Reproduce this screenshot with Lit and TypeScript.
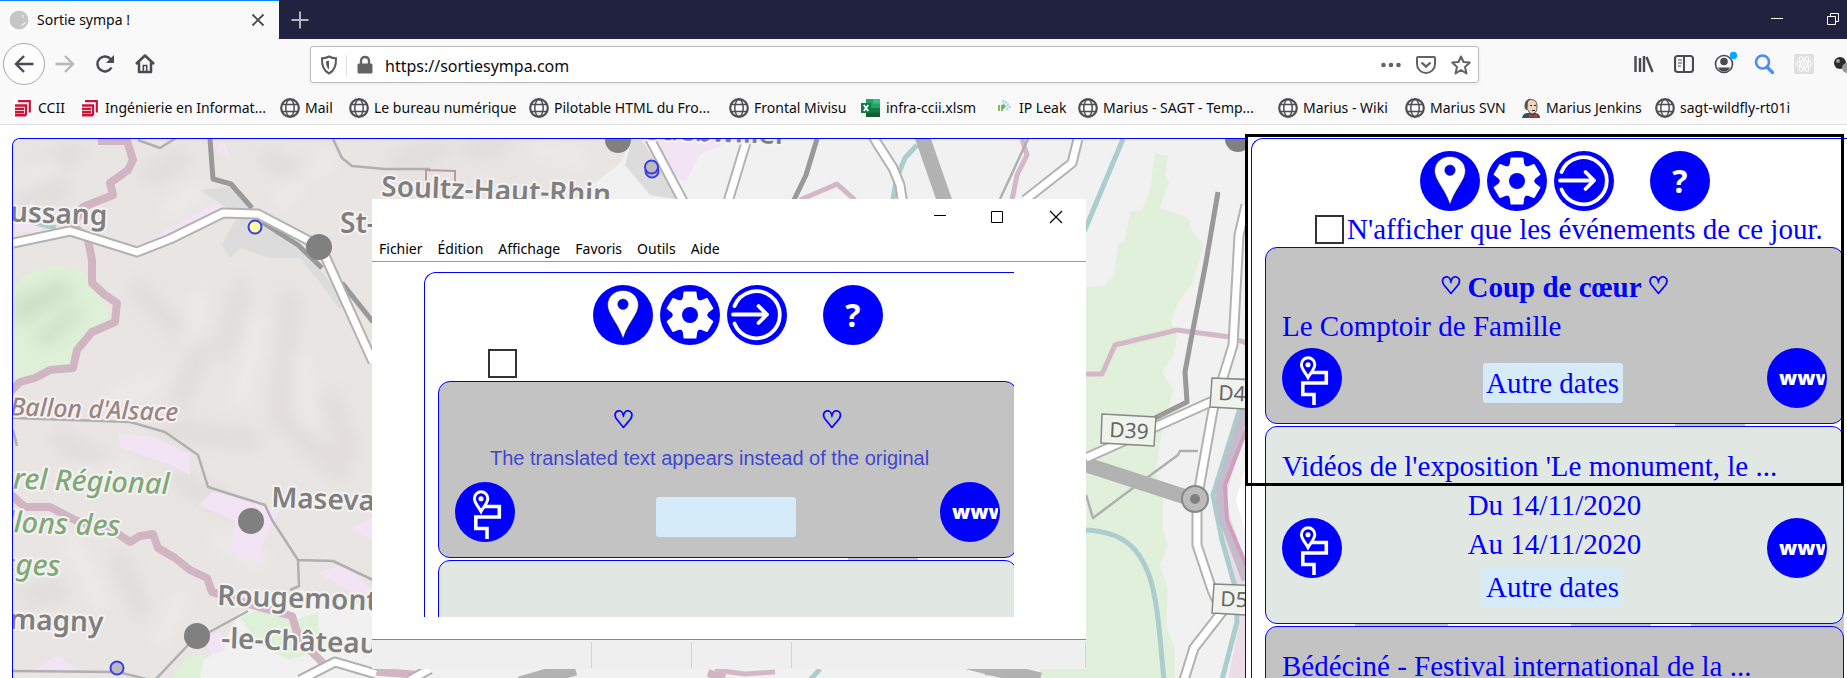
import { LitElement, html, svg, css, nothing } from "lit";
import { customElement, property } from "lit/decorators.js";

interface EventInfo {
  favourite?: boolean;
  title: string;
  dates: string[];
  tone: "grey" | "mint";
}

const EVENTS: EventInfo[] = [
  { favourite: true, title: "Le Comptoir de Famille", dates: [], tone: "grey" },
  {
    title: "Vidéos de l'exposition 'Le monument, le ...",
    dates: ["Du 14/11/2020", "Au 14/11/2020"],
    tone: "mint",
  },
  { title: "Bédéciné - Festival international de la ...", dates: [], tone: "grey" },
];

const gearPoints = (() => {
  const pts: string[] = [];
  const put = (r: number, deg: number) => {
    const a = ((deg - 90) * Math.PI) / 180;
    pts.push(`${(30 + r * Math.cos(a)).toFixed(1)},${(30 + r * Math.sin(a)).toFixed(1)}`);
  };
  for (let i = 0; i < 6; i++) {
    const c = i * 60;
    put(16.5, c - 28);
    put(18, c - 21);
    put(23.5, c - 14);
    put(23.5, c + 14);
    put(18, c + 21);
    put(16.5, c + 28);
  }
  return pts.join(" ");
})();

const pinIcon = svg`<path fill="#fff" stroke="#222" stroke-width=".6" fill-rule="evenodd"
  d="M30 5.5C21 5.5 14.6 11.8 14.6 20C14.6 29 24 37 29 51Q30 55 31 51C36 37 45.4 29 45.4 20C45.4 11.8 39 5.5 30 5.5ZM30 14a5.2 5.2 0 1 1 0 10.400a5.200 5.200 0 1 1 0-10.400Z"/>`;
const gearIcon = svg`<polygon points=${gearPoints} fill="#fff" stroke="#fff" stroke-width="1.500" stroke-linejoin="round"/>
  <circle cx="30" cy="30" r="8" fill="#00f"/>`;
const enterIcon = svg`<g fill="none" stroke="#fff" stroke-width="3.800" stroke-linecap="round" stroke-linejoin="round">
  <path d="M7.500 21A23.500 23.500 0 1 1 7.500 38.500"/><path d="M6 29.500H40M31.500 21L40 29.500L31.500 38"/></g>`;
const routeIcon = svg`<g fill="none" stroke="#fff" stroke-width="3.600">
  <path d="M29 24.500H44.300V35H20.800V46.500H32V57"/>
  <path d="M26 29.500C23 24 19.400 21 19.400 16.500a6.700 6.700 0 0 1 13.400 0C32.800 21 29 24 26 29.500Z" fill="#00f" stroke-width="3"/>
  <circle cx="26" cy="16.700" r="1.800" fill="#fff" stroke-width="1.500"/></g>`;

@customElement("sortie-panel")
export class SortiePanel extends LitElement {
  /** When set, the captions are left out, only the frames and icons remain. */
  @property({ type: Boolean }) bare = false;
  @property() notice = "";

  static styles = css`
    :host {
      display: block;
      box-sizing: border-box;
      border: 1px solid #00f;
      border-right: 0;
      border-bottom: 0;
      border-radius: 12px 0 0 0;
      background: #fff;
      padding: 12px 3px 0 13px;
      color: #00f;
      font: 29px/39px "Liberation Serif", serif;
      overflow: hidden;
    }
    button {
      border: 0;
      padding: 0;
      margin: 0;
      color: inherit;
      font: inherit;
    }
    .round {
      width: 60px;
      height: 60px;
      flex: none;
      border-radius: 50%;
      background: #00f;
      color: #fff;
      overflow: hidden;
      font: bold 32px/60px "Open Sans", sans-serif;
    }
    .round svg {
      display: block;
    }
    .web {
      padding: 0 2px 0 12px;
      text-align: left;
      font-size: 20px;
      font-weight: 800;
    }
    .web span {
      display: block;
      overflow: hidden;
      line-height: 60px;
    }
    .tools {
      display: flex;
      gap: 7px;
      padding-left: 155px;
    }
    .help {
      margin-left: 29px;
    }
    .today {
      display: flex;
      align-items: center;
      gap: 3px;
      height: 36px;
      padding-left: 50px;
      white-space: nowrap;
    }
    .today input {
      appearance: none;
      flex: none;
      box-sizing: border-box;
      width: 29px;
      height: 29px;
      margin: 0;
      border: 2px solid #333;
      background: #fff;
    }
    .cards {
      display: grid;
      gap: 2px;
      background: linear-gradient(90deg, #fff 90px, #c8c8c8 90px 183px, #fff 183px 306px, #c8c8c8 306px 386px, #fff 386px 426px, #c8c8c8 426px) 0 370px / 100% 20px no-repeat, linear-gradient(#c8c8c8, #c8c8c8) 410px 170px / 70px 12px no-repeat;
    }
    .card {
      border: 1px solid #00f;
      border-radius: 12px;
      padding: 20px 16px 13px;
    }
    .grey {
      background: #c3c3c3;
    }
    .mint {
      background: #e1e8e4;
    }
    h2,
    p {
      margin: 0;
      height: 39px;
      font-size: inherit;
      white-space: nowrap;
    }
    h2 {
      display: flex;
      justify-content: center;
      gap: 6px;
    }
    .heart {
      font: 24px/36px "DejaVu Sans", sans-serif;
      -webkit-text-stroke: 1px #00f;
    }
    .bare h2 {
      gap: 187px;
    }
    .bare p {
      padding-left: 35px;
      color: #3f48cc;
      font: 20px/34px "Liberation Sans", sans-serif;
    }
    .row {
      display: flex;
      align-items: center;
      justify-content: space-between;
    }
    .mid {
      display: grid;
      justify-items: center;
      padding: 0 0 3px;
    }
    .favourite .mid {
      padding: 14px 0 7px;
    }
    .dates {
      width: 140px;
      height: 40px;
      margin: 3px 4px 0 0;
      border-radius: 3px;
      background: #d6ebf9;
    }
  `;

  private renderEvent(e: EventInfo) {
    return html`<article class="card ${e.tone} ${e.favourite ? "favourite" : ""}">
      ${e.favourite
        ? html`<h2><span class="heart">♡</span>${this.bare ? nothing : html`<span>Coup de cœur</span>`}<span class="heart">♡</span></h2>`
        : nothing}
      <p>${this.bare ? (e.favourite ? this.notice : nothing) : e.title}</p>
      <div class="row">
        <button class="round" aria-label="Itinéraire"><svg width="60" height="60" viewBox="0 0 60 60">${routeIcon}</svg></button>
        <div class="mid">
          ${e.dates.map((d) => html`<span>${this.bare ? nothing : d}</span>`)}
          <button class="dates" aria-label="Autre dates">${this.bare ? nothing : "Autre dates"}</button>
        </div>
        <button class="round web" aria-label="Site web"><span>www</span></button>
      </div>
    </article>`;
  }

  render() {
    return html`<div class=${this.bare ? "bare" : "full"}>
      <div class="tools">
        ${[
          ["Lieu", pinIcon],
          ["Réglages", gearIcon],
          ["Connexion", enterIcon],
        ].map(([name, icon]) => html`<button class="round" aria-label=${name}><svg width="60" height="60" viewBox="0 0 60 60">${icon}</svg></button>`)}
        <button class="round help" aria-label="Aide">?</button>
      </div>
      <label class="today"><input type="checkbox" aria-label="N'afficher que les événements de ce jour." />${this.bare ? nothing : html`<span>N'afficher que les événements de ce jour.</span>`}</label>
      <div class="cards">${EVENTS.map((e) => this.renderEvent(e))}</div>
    </div>`;
  }
}

@customElement("sortie-map")
export class SortieMap extends LitElement {
  static styles = css`
    :host {
      display: block;
      overflow: hidden;
      background: #f1f1f1;
    }
    svg {
      display: block;
      width: 100%;
      height: 100%;
    }
    .line path {
      fill: none;
      stroke-linejoin: round;
    }
    .casing {
      stroke: #b2b2b0;
      stroke-width: 11;
    }
    .road {
      stroke: #fff;
      stroke-width: 7;
    }
    .minor {
      stroke: #b0b0b0;
      stroke-width: 2.500;
    }
    .rail {
      stroke: #999;
      stroke-width: 5;
    }
    .motorway {
      stroke: #b2b2b2;
      stroke-width: 15;
    }
    .water {
      stroke: #accdcd;
      stroke-width: 5;
    }
    .limit {
      stroke: #d2b5c3;
      stroke-width: 8;
    }
    .border {
      stroke: #d4b8c8;
      stroke-width: 5;
    }
    text {
      font: 600 28px "Noto Sans", sans-serif;
      fill: #7f7f7f;
      stroke: #f5f3f2;
      stroke-width: 4;
      paint-order: stroke;
      stroke-linejoin: round;
    }
    .park {
      font: italic 500 29px "Noto Sans", sans-serif;
      fill: #80a878;
    }
    .peak {
      font: italic 500 25px "Noto Sans", sans-serif;
      fill: #9a8484;
    }
    .ref {
      font: 21px "Noto Sans", sans-serif;
      fill: #666;
      stroke-width: 1;
    }
    .sign {
      fill: #eef3ec;
      stroke: #888;
      stroke-width: 1.500;
    }
    .town {
      fill: #808080;
    }
    .marker {
      fill: #bbb;
      stroke: #3a3aee;
      stroke-width: 2;
    }
    .marker.gold {
      fill: #ffffa0;
    }
  `;

  render() {
    const road = "M13 243L70 231L137 252L170 239L223 213L258 214L321 247L373 362M650 139L685 205M747 139L727 205M873 136L877 143L893 168L900 185L903 205M1078 139L1072 163L1025 200M1246 205L1239 235L1233 345L1213 410L1197 500L1197 545L1212 590L1222 612L1194 648L1184 680M1086 458L1155 427L1215 400M300 680L335 662L376 674M410 680L430 669";
    return html`<svg viewBox="13 139 1232 539" preserveAspectRatio="xMinYMin slice" role="img" aria-label="Carte">
      <defs>
        <filter id="soft" x="-20%" y="-20%" width="140%" height="140%"><feGaussianBlur stdDeviation="8" /></filter>
      </defs>
      <path fill="#e8e5e3" d="M0 130H640L618 165L560 210H400V610L340 600L300 590L240 612L220 650L170 680H0Z" />
      <g filter="url(#soft)" fill="none" stroke-linecap="round">
        <path stroke="#dfdad9" stroke-width="22" opacity=".7" d="M35 168L75 152M150 175L180 160M25 200L60 190M140 290L200 350L180 400M240 290L225 350M290 300L280 420L340 470M330 400L350 450M60 440L100 460M170 430L250 440M180 480L220 500M120 560L140 610M30 595L60 590M270 160L310 180M400 160L440 150M470 150L500 145" />
        <path stroke="#efedeb" stroke-width="16" opacity=".7" d="M20 180L50 165M170 210L200 190M110 400L160 380M200 300L190 340M260 320L240 400M300 360L310 420M70 540L100 600M220 540L260 560M180 600L160 640M280 200L330 160M80 475L130 470M540 150L580 160" />
      </g>
      <path fill="#dff0d8" d="M13 285L30 272L58 265L75 270L86 273L90 285L103 300L110 318L105 325L88 335L75 350L70 368L35 375L13 377Z" />
      <path fill="#cddfc6" filter="url(#soft)" d="M13 300L60 280L78 290L30 320L13 325ZM30 340L75 305L85 312L50 345Z" />
      <path fill="#dff0d8" d="M240 618L262 608L296 620L318 612L320 650L290 660L260 645ZM185 658L204 655L200 680H170Z" />
      <path fill="#e0f0da" d="M1155 153L1168 156L1165 175L1169 182L1160 208L1188 218L1192 232L1204 244L1193 282L1180 300L1171 320L1177 335L1174 355L1162 372L1173 390L1162 430L1156 470L1163 495L1163 530L1168 545L1160 565L1168 590L1166 625L1175 650V680H1040V600L1086 287L1105 286L1114 275L1118 245L1125 240L1130 212L1142 210L1150 190Z" />
      <path fill="#dddcdc" d="M200 190L232 186L252 208L275 225L300 245L345 300L340 310L318 280L300 258L270 258L240 248L230 258L222 245L238 215ZM632 140L625 165L650 195L680 200L660 139Z" />
      <path fill="#f3e4f5" d="M150 240L215 203L224 208L185 236ZM222 139L232 160L216 150ZM13 232L32 200L40 222L42 232ZM118 434L155 437L190 455L190 475L170 465L120 447ZM198 505L213 491L280 510L262 545V563L232 552L235 520ZM318 572L345 565L372 590V605ZM350 528L372 518V540ZM32 671L58 655L78 671ZM640 139H735L700 155L685 182L660 165ZM205 640L220 630L225 650L212 655Z" />
      <path fill="#ecdce8" d="M1246 425L1225 500L1246 565V680H1228L1240 620L1215 500Z" />
      <path fill="#fff" d="M1246 465L1236 500L1246 535Z" />
      <g class="line">
        <path class="limit" d="M98 141L127 141L133 160L128 170L110 183L113 195L83 207L73 225L88 240L92 260L92 283L105 295L117 303L115 322L92 332L77 350L73 368L50 370L35 378L20 382L10 392M10 494L25 507L50 507L75 520L118 534L130 542L140 536L153 534L158 548L175 558L190 570L207 578L212 592L255 606L292 616L297 632L310 650L325 665M355 670L420 675M708 673L725 678" />
        <path class="border" d="M800 200L837 184L855 200M1022 139L1027 155L1017 175L1012 200M1086 374L1102 374L1115 345L1177 330L1230 337L1246 343M715 670L745 674L775 672M985 673L1030 674" />
        <path class="water" d="M917 145L905 158L896 180L893 200M1123 139L1084 232M1086 530C1125 532 1140 550 1149 575S1160 640 1164 680M1241 405L1213 495L1222 540L1236 590L1237 622L1222 680M820 669L810 680M32 222L56 228" />
        <path stroke="#c3bccb" stroke-width="9" d="M1246 408L1220 490L1222 515L1246 580" />
        <path stroke="#cf9fbd" stroke-width="4" d="M1246 430L1225 485L1227 520L1246 565" />
        <path class="minor" d="M138 140L160 148L176 138M333 139L342 158L352 166L385 169L430 169M13 418L130 422L165 432L198 455L208 487L265 505L272 520L298 560L333 561L373 580M298 560L299 586L290 590M195 640L248 611M155 680L190 643M13 671L118 672L150 680M13 430L17 446M1086 495L1093 518L1133 488L1178 455L1180 451L1198 451M1028 139L1000 199" />
        <path class="rail" d="M210 139L213 179L231 184L252 208M262 222L298 245L322 268M342 283L373 322M817 139L806 175L793 202M1218 192L1206 262L1190 345L1185 372L1187 402L1155 418" />
        <path class="motorway" d="M922 136L945 202M1084 464L1195 500M960 660L1040 680M520 684L575 668" />
        <path class="casing" d=${road} />
        <path class="road" d=${road} />
      </g>
      <path fill="none" stroke="#b99c9c" stroke-width="2" d="M426 186V170L455 171V187" />
      <circle cx="319" cy="247" r="13" class="town" />
      <circle cx="618" cy="140" r="13" class="town" />
      <circle cx="251" cy="521" r="13" class="town" />
      <circle cx="197" cy="636" r="13" class="town" />
      <circle cx="1238" cy="139" r="13" class="town" />
      <circle cx="1195" cy="499" r="13" fill="#bbb" stroke="#888" stroke-width="2" />
      <circle cx="1195" cy="499" r="5" class="town" />
      <g>
        <text x="107" y="225" text-anchor="end" transform="rotate(2 107 225)">Bussang</text>
        <text x="340" y="233">St-Amarin</text>
        <text x="381" y="196" transform="rotate(2 381 196)">Soultz-Haut-Rhin</text>
        <text x="640" y="139" transform="rotate(2 640 139)">Guebwiller</text>
        <text x="271" y="507" transform="rotate(2 271 507)">Masevaux</text>
        <text x="217" y="605" transform="rotate(2 217 605)">Rougemont</text>
        <text x="221" y="648" transform="rotate(2 221 648)">-le-Château</text>
        <text x="103" y="632" text-anchor="end" transform="rotate(2 103 632)">Giromagny</text>
      </g>
      <text class="peak" x="178" y="421" text-anchor="end" transform="rotate(2 178 421)">Ballon d'Alsace</text>
      <text class="park" x="169" y="494" text-anchor="end" transform="rotate(2 169 494)">Naturel Régional</text>
      <text class="park" x="120" y="536" text-anchor="end" transform="rotate(2 120 536)">Ballons des</text>
      <text class="park" x="60" y="576" text-anchor="end" transform="rotate(2 60 576)">Vosges</text>
      <path class="sign" d="M1102 414L1156 417L1154 446L1101 443Z" />
      <text class="ref" x="1109" y="437" transform="rotate(3 1109 437)">D39</text>
      <path class="sign" d="M1212 378L1260 380V410L1210 407Z" />
      <text class="ref" x="1218" y="400" transform="rotate(3 1218 400)">D4b</text>
      <path class="sign" d="M1214 584L1260 586V616L1212 613Z" />
      <text class="ref" x="1220" y="606" transform="rotate(3 1220 606)">D52</text>
      <circle class="marker gold" cx="255" cy="227" r="6.500" />
      <circle class="marker" cx="652" cy="171" r="6.500" />
      <circle class="marker" cx="651.500" cy="167" r="6.500" />
      <circle class="marker" cx="117" cy="668" r="6.500" />
    </svg>`;
  }
}

const globe = svg`<g fill="none" stroke="#4f4f52" stroke-width="1.500"><circle cx="10" cy="10" r="8.800" stroke-width="2.200"/><ellipse cx="10" cy="10" rx="4.200" ry="8.500"/><path d="M2.500 6.500H17.500M2.500 13.500H17.500"/></g>`;
const ccii = svg`<path fill="#fff" d="M0 0H20V20H0Z"/><path fill="none" stroke="#c8143c" stroke-width="2.200" d="M5 3.200H16.800V14.500"/><path fill="none" stroke="#c8143c" stroke-width="2.400" d="M2 7.500H13V17.500M2 11H11M2 14.200H11M2 17.200H13"/>`;
const sheet = svg`<path fill="#21a366" d="M5 1H19V10H5Z"/><path fill="#33c481" d="M12 1H19V5.500H12Z"/><path fill="#107c41" d="M5 10H19V19H5Z"/><path fill="#185c37" d="M5 14.500H19V19H5Z"/><path fill="#107c41" d="M0 5H10V15H0Z"/><path stroke="#fff" stroke-width="1.800" d="M2.800 7L7.300 13M7.300 7L2.800 13"/>`;
const leak = svg`<path fill="none" stroke="#9fd2ee" stroke-width="2" stroke-dasharray="2 1" d="M8 3Q14 4 16 10M9 6Q13 7 13.500 12"/><path fill="none" stroke="#5fae3c" stroke-width="1.600" d="M5 7V13M8 13V7.500H10Q11.500 9 8 10.500"/>`;
const butler = svg`<path fill="#335061" d="M1 20Q2 15 7 15H15Q19 16 19 20Z"/><path fill="#f0d6b7" stroke="#222" stroke-width=".7" d="M6 8Q5 2 10 1.500Q16 1.500 16 8Q16.500 14 12 16Q8 16 7 12Q5 11 6 8Z"/><path fill="#555" d="M3.500 9Q3 1 10 .500Q6 3 6.500 9L6 12Q4 12 3.500 9Z"/><path stroke="#222" stroke-width="1" d="M9 7.500H11M13 7.500H15M11 12.500H14"/><path fill="#d33833" d="M8 16L12 18L16 16V20L12 18.500L8 20Z"/>`;

const BOOKMARKS: [string, unknown][] = [
  ["CCII", ccii],
  ["Ingénierie en Informat...", ccii],
  ["Mail", globe],
  ["Le bureau numérique", globe],
  ["Pilotable HTML du Fro...", globe],
  ["Frontal Mivisu", globe],
  ["infra-ccii.xlsm", sheet],
  ["IP Leak", leak],
  ["Marius - SAGT - Temp...", globe],
  ["Marius - Wiki", globe],
  ["Marius SVN", globe],
  ["Marius Jenkins", butler],
  ["sagt-wildfly-rt01i", globe],
];

const icon20 = (shape: unknown) => html`<svg width="20" height="20" viewBox="0 0 20 20">${shape}</svg>`;

@customElement("app-root")
export class AppRoot extends LitElement {
  static styles = css`
    :host {
      display: flex;
      flex-direction: column;
      position: relative;
      height: 100vh;
      overflow: hidden;
      background: #fff;
      color: #0c0c0d;
      font: 14px/20px "Noto Sans", sans-serif;
    }
    button {
      border: 0;
      padding: 0;
      margin: 0;
      background: none;
      color: inherit;
      font: inherit;
      display: grid;
      place-items: center;
    }
    svg {
      display: block;
      flex: none;
    }
    .tabs {
      display: flex;
      align-items: stretch;
      height: 39px;
      background: #20223f;
      flex: none;
    }
    .tab {
      display: flex;
      align-items: center;
      box-sizing: border-box;
      width: 279px;
      padding: 0 11px 0 9px;
      gap: 8px;
      border-top: 1px solid #0a84ff;
      background: #f9f9fa;
      white-space: nowrap;
    }
    .tab span {
      flex: 1;
    }
    .new {
      width: 41px;
    }
    .controls {
      display: flex;
      gap: 37px;
      margin-left: auto;
      align-items: center;
      padding-right: 3px;
    }
    .bar {
      display: flex;
      align-items: center;
      height: 50px;
      padding: 0 0 0 3px;
      background: #f9f9fa;
      flex: none;
    }
    .bar button {
      width: 40px;
      height: 42px;
      flex: none;
    }
    .bar .back {
      width: 42px;
      box-sizing: border-box;
      border: 1px solid #aaa;
      border-radius: 50%;
      background: #fdfdfd;
    }
    .url {
      display: flex;
      align-items: center;
      flex: 1;
      box-sizing: border-box;
      height: 37px;
      margin: 1px 145px 0 145px;
      border: 1px solid #bbb;
      border-radius: 3px;
      background: #fff;
      padding: 0 0 0 8px;
      box-shadow: 0 1px 4px rgba(0, 0, 0, 0.06);
    }
    .url .shield {
      padding-right: 7px;
      border-right: 1px solid #ddd;
    }
    .url .lock {
      padding: 0 10px 0 8px;
    }
    .url input {
      flex: 1;
      min-width: 0;
      border: 0;
      padding: 2px 0 0;
      outline: 0;
      background: none;
      color: #0c0c0d;
      font: 16px/24px "Noto Sans", sans-serif;
    }
    .url button {
      width: 35px;
      height: 35px;
    }
    .bookmarks {
      display: grid;
      grid-template-columns: 67px 200px 69px 180px 200px 132px 133px 84px 200px 127px 116px 134px auto;
      align-items: center;
      box-sizing: border-box;
      height: 36px;
      padding: 2px 0 0 13px;
      border-bottom: 1px solid #dedede;
      background: #f9f9fa;
      flex: none;
    }
    .bookmarks a {
      display: flex;
      gap: 5px;
      align-items: center;
      color: inherit;
      text-decoration: none;
      white-space: nowrap;
    }
    .page {
      display: flex;
      flex: 1;
      min-height: 0;
      gap: 5px;
      padding: 13px 0 0 12px;
    }
    .map {
      flex: 1;
      min-width: 0;
      border: 1px solid #00f;
      border-bottom: 0;
      border-radius: 8px 0 0 0;
    }
    .side {
      position: relative;
      flex: 0 0 596px;
    }
    .side sortie-panel {
      height: 100%;
    }
    .capture {
      position: absolute;
      left: -6px;
      top: -4px;
      right: 3px;
      height: 352px;
      box-sizing: border-box;
      border: 3px solid #000;
      pointer-events: none;
    }
    .window {
      position: absolute;
      left: 372px;
      top: 199px;
      width: 714px;
      display: flex;
      flex-direction: column;
      background: #fff;
      color: #000;
    }
    .title {
      display: flex;
      justify-content: flex-end;
      height: 36px;
      gap: 34px;
      padding: 0 18px;
    }
    .title button {
      width: 24px;
      height: 36px;
    }
    .menu {
      display: flex;
      gap: 15px;
      height: 24px;
      padding: 2px 7px 0;
      border-bottom: 1px solid #999;
      line-height: 23px;
    }
    .menu button {
      height: 22px;
    }
    .view {
      padding: 10px 72px 22px 52px;
    }
    .view sortie-panel {
      height: 345px;
      padding-right: 0;
    }
    .clip {
      overflow: hidden;
    }
    .clip sortie-panel {
      margin-right: -3px;
    }
    .status {
      display: grid;
      grid-template-columns: 220px 100px 100px 1fr;
      height: 29px;
      border-top: 1px solid #888;
      background: #efefef;
    }
    .status i {
      margin: 2px 0 1px;
      border-right: 1px solid #d5d5d5;
    }
  `;

  render() {
    const ink = "#4a4a4f";
    return html`
      <header class="tabs">
        <div class="tab">
          ${icon20(svg`<path fill="#fff" d="M0 0H20V20H0Z"/><ellipse cx="10" cy="10" rx="9.500" ry="9.500" fill="#c6c6c6"/><path d="M14 5V8M12 15Q15 15 16 12" stroke="#eee" stroke-width="1.200" fill="none"/>`)}
          <span>Sortie sympa !</span>
          <button aria-label="Fermer l'onglet">${icon20(svg`<path d="M4.500 4.500L15.500 15.500M15.500 4.500L4.500 15.500" stroke=${ink} stroke-width="1.800"/>`)}</button>
        </div>
        <button class="new" aria-label="Nouvel onglet">${icon20(svg`<path d="M10 1.500V18.500M1.500 10H18.500" stroke="#b4b5bf" stroke-width="2"/>`)}</button>
        <div class="controls">
          <button aria-label="Réduire">${icon20(svg`<path d="M4 8.500H16" stroke="#fff"/>`)}</button>
          <button aria-label="Restaurer">${icon20(svg`<path d="M3.500 6.500H11.500V14.500H3.500ZM6.500 6V3.500H14.500V11.500H12" stroke="#fff" fill="none"/>`)}</button>
        </div>
      </header>
      <nav class="bar">
        <button class="back" aria-label="Précédent">${icon20(svg`<path d="M19.500 10H2M10 2L2 10L10 18" stroke=${ink} stroke-width="2.400" fill="none"/>`)}</button>
        <button aria-label="Suivant">${icon20(svg`<path d="M.500 10H18M10 2L18 10L10 18" stroke="#b8b8bb" stroke-width="2.400" fill="none"/>`)}</button>
        <button aria-label="Actualiser">${icon20(svg`<path d="M16.500 13.500A7.500 7.500 0 1 1 16 5.500" stroke=${ink} stroke-width="2.500" fill="none"/><path d="M19 1V9H11Z" fill=${ink}/>`)}</button>
        <button aria-label="Accueil">${icon20(svg`<path d="M1 10L10 1.500L19 10M4 8.500V18H16V8.500" stroke=${ink} stroke-width="2.500" fill="none" stroke-linejoin="round"/><path d="M8.300 18V11.500H11.700V18" stroke=${ink} stroke-width="1.600" fill="none"/>`)}</button>
        <label class="url">
          <span class="shield">${icon20(svg`<path d="M10 1.500Q14 3.500 17 3.300Q17.500 15 10 18.500Q2.500 15 3 3.300Q6 3.500 10 1.500Z" stroke="#5a5a5e" stroke-width="2" fill="none"/><path d="M10 5.500V14.500Q7 12.500 7 6.200Z" fill="#5a5a5e"/>`)}</span>
          <span class="lock">${icon20(svg`<path d="M6 9V6Q6 2 10 2T14 6V9" stroke="#636366" stroke-width="2.400" fill="none"/><rect x="2.500" y="8.500" width="15" height="10" rx="1.500" fill="#636366"/>`)}</span>
          <input aria-label="Adresse" value="https://sortiesympa.com" />
          <button aria-label="Actions">${icon20(svg`<g fill="#636366"><circle cx="2.500" cy="10" r="2.300"/><circle cx="10" cy="10" r="2.300"/><circle cx="17.500" cy="10" r="2.300"/></g>`)}</button>
          <button aria-label="Pocket">${icon20(svg`<path d="M2 2H18Q19 2 19 3V9A9 9 0 0 1 1 9V3Q1 2 2 2Z" stroke="#636366" stroke-width="2" fill="none"/><path d="M5.500 7.500L10 11.700L14.500 7.500" stroke="#636366" stroke-width="2.300" fill="none"/>`)}</button>
          <button aria-label="Marquer">${icon20(svg`<path d="M10 1.500L12.500 7L18.800 7.600L14 12L15.500 18.500L10 15L4.500 18.500L6 12L1.200 7.600L7.500 7Z" stroke="#636366" stroke-width="2" fill="none" stroke-linejoin="round"/>`)}</button>
        </label>
        <button aria-label="Bibliothèque">${icon20(svg`<path d="M1.500 2V18M6 4V18M10 2V18M12.500 3L18.500 18" stroke=${ink} stroke-width="2.400"/>`)}</button>
        <button aria-label="Panneau latéral">${icon20(svg`<rect x="1" y="2" width="18" height="16" rx="2.500" stroke=${ink} stroke-width="2.200" fill="none"/><path d="M10 2V18" stroke=${ink} stroke-width="2"/><path d="M4 6H8M4 9H8M4 12H7" stroke=${ink} stroke-width="1.200"/>`)}</button>
        <button aria-label="Compte"><svg width="26" height="26" viewBox="0 0 26 26"><circle cx="13" cy="13" r="8.500" fill="none" stroke=${ink} stroke-width="1.600"/><circle cx="13" cy="10.500" r="3.800" fill=${ink}/><path d="M7 16.500H19Q17 20.500 13 20.500T7 16.500Z" fill=${ink}/><circle cx="22.500" cy="4.500" r="3.700" fill="#0af"/></svg></button>
        <button aria-label="Rechercher">${icon20(svg`<circle cx="8.500" cy="8" r="6.500" stroke="#4a8df8" stroke-width="2.600" fill="none"/><path d="M13 13L18.500 18.500" stroke="#4a8df8" stroke-width="3.200" stroke-linecap="round"/>`)}</button>
        <button aria-label="React">${icon20(svg`<rect width="20" height="20" rx="2" fill="#e0e0e0"/><g fill="none" stroke="#fff"><ellipse cx="10" cy="10" rx="8" ry="3.300"/><ellipse cx="10" cy="10" rx="8" ry="3.300" transform="rotate(60 10 10)"/><ellipse cx="10" cy="10" rx="8" ry="3.300" transform="rotate(120 10 10)"/><circle cx="10" cy="10" r="1.500"/></g>`)}</button>
        <svg width="23" height="24" viewBox="0 0 23 24"><circle cx="16" cy="11" r="6" fill="#2b2b2b"/><circle cx="14" cy="9" r="2" fill="#999"/><circle cx="23" cy="16" r="5" fill="#999"/></svg>
      </nav>
      <nav class="bookmarks">${BOOKMARKS.map(([name, shape]) => html`<a href="#">${icon20(shape)}<span>${name}</span></a>`)}</nav>
      <main class="page">
        <sortie-map class="map"></sortie-map>
        <aside class="side">
          <sortie-panel></sortie-panel>
          <div class="capture"></div>
        </aside>
      </main>
      <section class="window">
        <div class="title">
          <button aria-label="Réduire">${icon20(svg`<path d="M4 8.500H16" stroke="#000"/>`)}</button>
          <button aria-label="Agrandir">${icon20(svg`<path d="M3.500 4.500H14.500V15.500H3.500Z" stroke="#000" fill="none"/>`)}</button>
          <button aria-label="Fermer">${icon20(svg`<path d="M4 4L16 16M16 4L4 16" stroke="#000" stroke-width="1.200"/>`)}</button>
        </div>
        <nav class="menu">
          ${["Fichier", "Édition", "Affichage", "Favoris", "Outils", "Aide"].map((m) => html`<button>${m}</button>`)}
        </nav>
        <div class="view"><div class="clip"><sortie-panel bare notice="The translated text appears instead of the original"></sortie-panel></div></div>
        <div class="status"><i></i><i></i><i></i><i></i></div>
      </section>
    `;
  }
}
